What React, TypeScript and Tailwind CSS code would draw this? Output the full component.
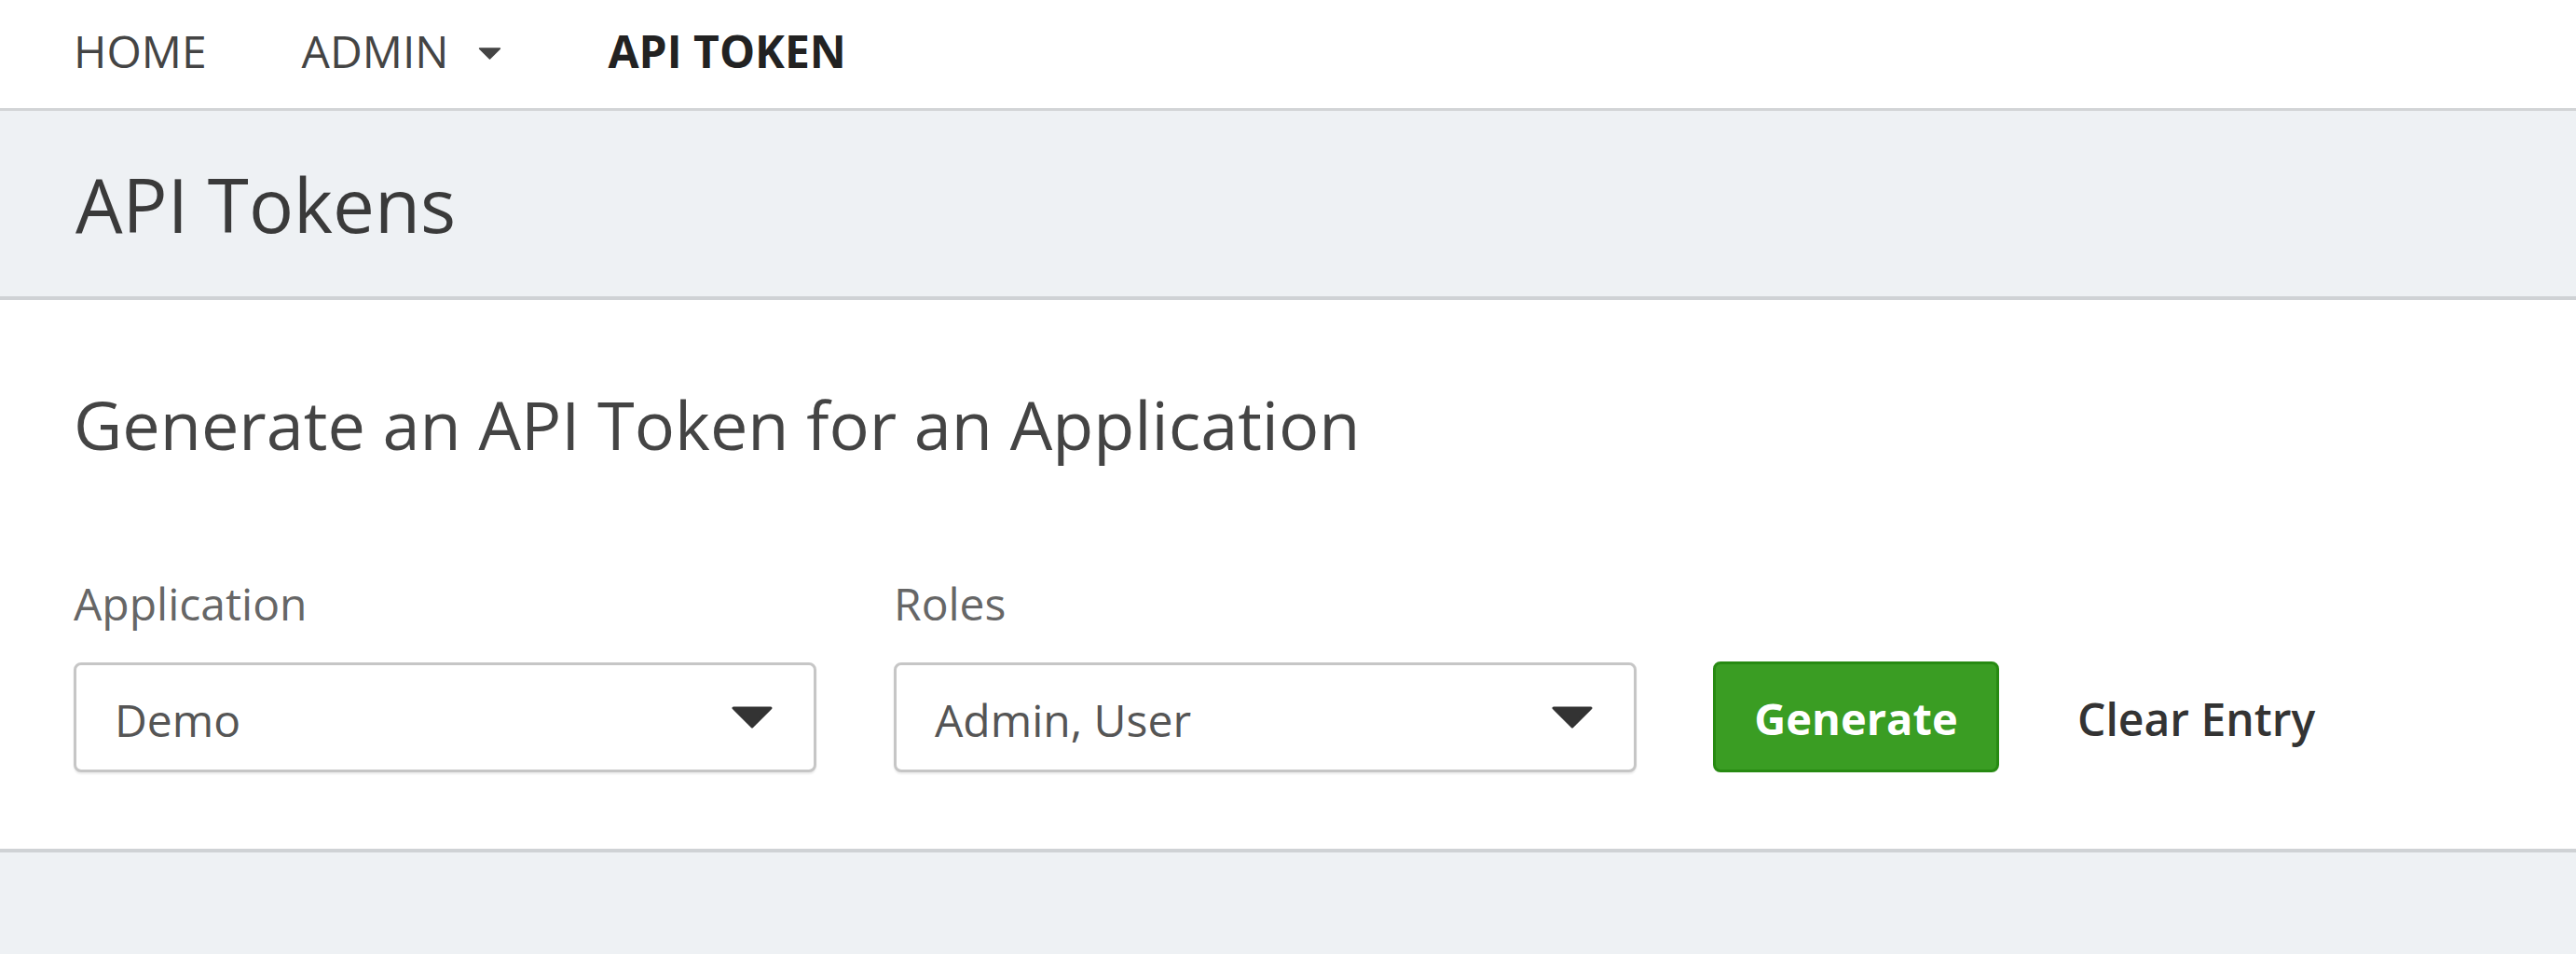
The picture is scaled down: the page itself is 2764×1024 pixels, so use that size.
import React from 'react'

const font = { fontFamily: '"Open Sans", "Noto Sans", sans-serif' }

function Caret({ className }: { className?: string }) {
  return (
    <svg viewBox="0 0 44 24" className={className} aria-hidden="true">
      <path d="M2 2 L42 2 L22 22 Z" fill="currentColor" stroke="currentColor" strokeWidth="3" strokeLinejoin="round" />
    </svg>
  )
}

function SelectBox({ value }: { value: string }) {
  return (
    <div className="flex h-[118px] w-[797px] items-center justify-between rounded-[8px] border-[3px] border-[#c6c6c6] bg-white pl-[41px] pr-[44px] shadow-[0_2px_2px_rgba(0,0,0,0.08)]">
      <span className="mt-[6px] text-[48px] leading-none text-[#555]">{value}</span>
      <Caret className="h-[24px] w-[44px] text-[#333]" />
    </div>
  )
}

export default function App() {
  return (
    <div className="min-h-[1024px] bg-[#eef1f4]" style={font}>
      <nav className="flex h-[119px] items-center border-b-[3px] border-[#d2d4d6] bg-white pb-[6px] pl-[79px]">
        <a className="text-[48px] leading-none text-[#444]">HOME</a>
        <a className="ml-[102px] flex items-center text-[48px] leading-none text-[#444]">
          ADMIN
          <Caret className="ml-[32px] mt-[4px] h-[13px] w-[25px] text-[#444]" />
        </a>
        <a className="ml-[114px] text-[48px] font-bold leading-none text-[#222]">API TOKEN</a>
      </nav>

      <header className="flex h-[203px] items-center border-b-[4px] border-[#cfd2d5] pl-[81px]">
        <h1 className="text-[80px] font-normal leading-none text-[#3a3a3a]">API Tokens</h1>
      </header>

      <section className="border-b-[4px] border-[#cfd2d5] bg-white pb-[82px] pl-[79px] pt-[97px]">
        <h2 className="text-[72px] font-normal leading-none text-[#444]">Generate an API Token for an Application</h2>

        <div className="mt-[133px] flex items-end">
          <div className="flex flex-col">
            <label className="text-[48px] leading-none text-[#666]">Application</label>
            <div className="mt-[39px]">
              <SelectBox value="Demo" />
            </div>
          </div>
          <div className="ml-[83px] flex flex-col">
            <label className="text-[48px] leading-none text-[#666]">Roles</label>
            <div className="mt-[39px]">
              <SelectBox value="Admin, User" />
            </div>
          </div>
          <button
            type="button"
            className="ml-[82px] flex h-[119px] w-[307px] items-center justify-center rounded-[8px] border-[3px] border-[#278a12] bg-[#3a9d23] pt-[4px] text-[47px] font-bold leading-none text-white"
          >
            Generate
          </button>
          <button type="button" className="ml-[84px] flex h-[119px] items-center pt-[4px] text-[48px] font-semibold leading-none text-[#333]">
            Clear Entry
          </button>
        </div>
      </section>
    </div>
  )
}
